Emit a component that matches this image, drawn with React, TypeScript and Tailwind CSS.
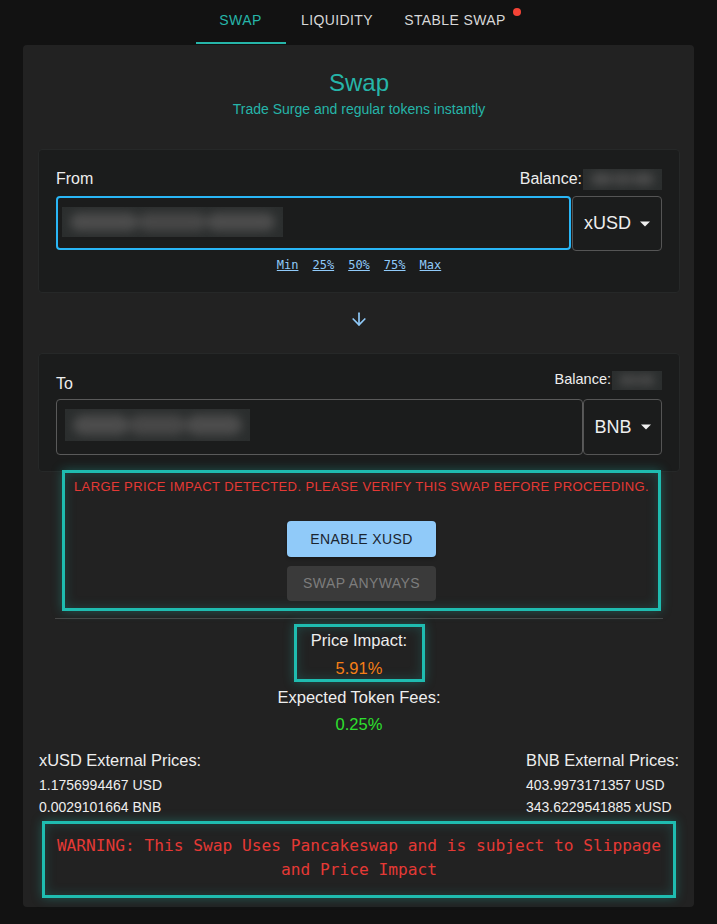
import { ArrowDown } from 'lucide-react';

function Blur({ className }: { className: string }) {
  return (
    <div className={`overflow-hidden bg-[#2b2e2e] ${className}`}>
      <div className="h-full w-full flex items-center justify-around px-2 blur-[5px]">
        <div className="h-[60%] flex-1 rounded-full bg-[#4c4c4c]" />
        <div className="h-[60%] flex-1 rounded-full bg-[#474747]" />
        <div className="h-[60%] flex-1 rounded-full bg-[#4c4c4c]" />
      </div>
    </div>
  );
}

function Caret() {
  return (
    <svg width="10" height="6" viewBox="0 0 10 5" className="ml-[9px]">
      <path d="M0 0l5 5 5-5z" fill="#f0f0f0" />
    </svg>
  );
}

const glow =
  'border-[3px] border-[#1fbcb0] shadow-[0_0_10px_rgba(31,188,176,0.35),inset_0_0_12px_rgba(31,188,176,0.22)]';

export default function App() {
  return (
    <div className="min-h-[924px] bg-[#121212] font-['Liberation_Sans',Arial,sans-serif] text-[#eeeeee]">
      {/* tabs */}
      <div className="flex justify-center h-[45px]">
        <div className="relative w-[90px] flex items-center justify-center pb-[5px] text-[14px] tracking-[0.4px] text-[#26b5a9]">
          SWAP
          <div className="absolute left-0 right-0 bottom-[1px] h-[2px] bg-[#26b5a9]" />
        </div>
        <div className="w-[103px] flex items-center justify-center pb-[5px] text-[14px] tracking-[0.4px] text-[#d8d8d8]">
          LIQUIDITY
        </div>
        <div className="w-[133px] flex items-center justify-center pb-[5px] text-[14px] tracking-[0.4px] text-[#d8d8d8]">
          <span className="relative">
            STABLE SWAP
            <span className="absolute -right-[15px] -top-[2px] h-[8px] w-[8px] rounded-full bg-[#f44336]" />
          </span>
        </div>
      </div>

      {/* card */}
      <div className="mx-[23px] w-[671px] rounded-[4px] bg-[#222222] pl-[15px] pr-[14px] pb-[9px]">
        <div className="pt-[24px] text-center">
          <div className="text-[24px] leading-[28px] text-[#26b5a9]">Swap</div>
          <div className="mt-[2px] text-[14px] leading-[20px] text-[#26b5a9]">Trade Surge and regular tokens instantly</div>
        </div>

        {/* from */}
        <div className="mt-[30px] h-[144px] rounded-[4px] border border-[#262828] bg-[#1b1c1c] pl-[17px] pr-[17px] pt-[17px]">
          <div className="flex items-center justify-between h-[24px]">
            <span className="text-[16px]">From</span>
            <div className="flex items-center">
              <span className="text-[16px]">Balance:</span>
              <Blur className="ml-[1px] h-[21px] w-[79px]" />
            </div>
          </div>
          <div className="mt-[5px] flex">
            <div className="h-[54px] flex-1 rounded-[4px] border-2 border-[#29b6f6] p-[9px_4px]">
              <Blur className="h-[30px] w-[221px]" />
            </div>
            <div className="ml-[1px] flex h-[55px] w-[90px] items-center justify-center rounded-[4px] border border-[#555555] text-[18px]">
              xUSD
              <Caret />
            </div>
          </div>
          <div className="mt-[6px] flex justify-center gap-[14px] font-['DejaVu_Sans_Mono',monospace] text-[12px] leading-[16px] text-[#90caf9]">
            <span className="underline">Min</span>
            <span className="underline">25%</span>
            <span className="underline">50%</span>
            <span className="underline">75%</span>
            <span className="underline">Max</span>
          </div>
        </div>

        <div className="flex h-[60px] items-center justify-center pb-[8px]">
          <ArrowDown size={20} strokeWidth={2} color="#90caf9" />
        </div>

        {/* to */}
        <div className="h-[119px] rounded-[4px] border border-[#262828] bg-[#1b1c1c] pl-[17px] pr-[17px] pt-[17px]">
          <div className="flex items-center justify-between h-[24px]">
            <span className="mt-[2px] text-[16px]">To</span>
            <div className="-mt-[6px] flex items-center">
              <span className="text-[14.5px]">Balance:</span>
              <Blur className="ml-[1px] h-[19px] w-[50px]" />
            </div>
          </div>
          <div className="mt-[4px] flex">
            <div className="h-[56px] flex-1 rounded-[4px] border border-[#5a5a5a] px-[8px] pt-[9px]">
              <Blur className="h-[32px] w-[185px]" />
            </div>
            <div className="flex h-[56px] w-[79px] items-center justify-center rounded-[4px] border border-[#555555] text-[18px]">
              BNB
              <Caret />
            </div>
          </div>
        </div>

        {/* price impact warning */}
        <div className={`relative -mt-[2px] ml-[24px] mr-[19px] h-[141px] ${glow} pt-[6px]`}>
          <div className="text-center text-[13px] leading-[16px] tracking-[0.4px] text-[#e53935]">
            LARGE PRICE IMPACT DETECTED. PLEASE VERIFY THIS SWAP BEFORE PROCEEDING.
          </div>
          <div className="mt-[26px] flex flex-col items-center gap-[9px]">
            <div className="flex h-[36px] w-[149px] items-center justify-center rounded-[4px] bg-[#90caf9] text-[14px] tracking-[0.4px] text-[#1b2530] shadow-[0_2px_3px_rgba(0,0,0,0.3)]">
              ENABLE XUSD
            </div>
            <div className="flex h-[35px] w-[149px] items-center justify-center rounded-[4px] bg-[#3a3a3a] text-[14px] tracking-[0.4px] text-[#7d7d7d]">
              SWAP ANYWAYS
            </div>
          </div>
        </div>

        <div className="mx-[17px] mt-[7px] h-px bg-[#474747]" />

        {/* stats */}
        <div className="mt-[5px] flex flex-col items-center">
          <div className={`h-[58px] w-[131px] ${glow} text-center`}>
            <div className="pt-[3px] text-[16.5px] leading-[20px]">Price Impact:</div>
            <div className="mt-[8px] text-[16.5px] leading-[20px] text-[#f57f17]">5.91%</div>
          </div>
          <div className="mt-[5px] text-[16.5px] leading-[20px]">Expected Token Fees:</div>
          <div className="mt-[7px] text-[16.5px] leading-[20px] text-[#2ee02e]">0.25%</div>
        </div>

        {/* external prices */}
        <div className="mt-[16px] flex justify-between pl-[1px]">
          <div>
            <div className="text-[16.4px] leading-[20px]">xUSD External Prices:</div>
            <div className="mt-[6px] text-[14px] leading-[18px]">1.1756994467 USD</div>
            <div className="mt-[4px] text-[14px] leading-[18px]">0.0029101664 BNB</div>
          </div>
          <div className="w-[154px]">
            <div className="text-[16.4px] leading-[20px]">BNB External Prices:</div>
            <div className="mt-[6px] text-[14px] leading-[18px]">403.9973171357 USD</div>
            <div className="mt-[4px] text-[14px] leading-[18px]">343.6229541885 xUSD</div>
          </div>
        </div>

        <div className={`mx-[4px] mt-[5px] h-[77px] ${glow} px-[6px] pt-[10px] text-center font-['DejaVu_Sans_Mono',monospace] text-[16.2px] leading-[24px] text-[#e53935]`}>
          WARNING: This Swap Uses Pancakeswap and is subject to Slippage and Price Impact
        </div>
      </div>
    </div>
  );
}
